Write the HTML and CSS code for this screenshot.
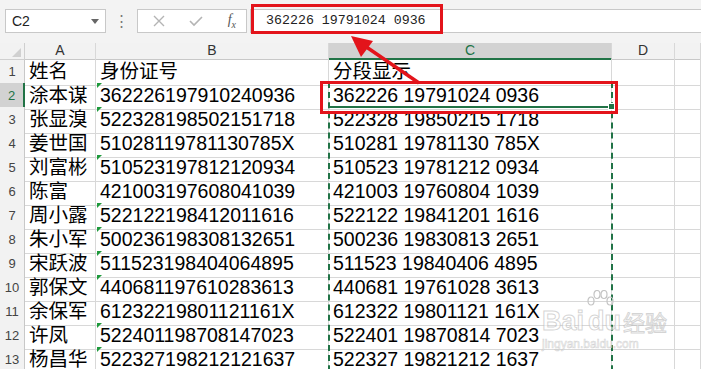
FILE: index.html
```html
<!DOCTYPE html>
<html lang="zh-CN">
<head>
    <meta charset="UTF-8">
    <title>身份证号分段显示</title>
    <link rel="stylesheet" href="styles.css">
</head>
<body>
    <div class="toolbar">
        <div class="namebox">
            <span>C2</span>
            <span class="caret"></span>
        </div>
        <div class="dots">⋮</div>
        <div class="fx-buttons">
            <svg width="12" height="12" viewBox="0 0 12 12"><path d="M1 1 L11 11 M11 1 L1 11" stroke="#b4b4b4" stroke-width="1.4" fill="none"/></svg>
            <svg width="14" height="12" viewBox="0 0 14 12"><path d="M1 6 L5 10 L13 2" stroke="#b4b4b4" stroke-width="1.6" fill="none"/></svg>
            <span class="fx">f<sub>x</sub></span>
        </div>
        <div class="formula">362226 19791024 0936</div>
    </div>
    <div class="gap"></div>

    <div class="sheet">
        <div class="row head">
            <div class="corner"><span class="tri"></span></div>
            <div class="col">A</div>
            <div class="col">B</div>
            <div class="col active">C</div>
            <div class="col">D</div>
            <div class="col"></div>
        </div>
        <div class="row"><div class="num">1</div><div class="cell">姓名</div><div class="cell">身份证号</div><div class="cell">分段显示</div><div class="cell"></div><div class="cell"></div></div>
        <div class="row"><div class="num active">2</div><div class="cell">涂本谋</div><div class="cell flag">362226197910240936</div><div class="cell">362226 19791024 0936</div><div class="cell"></div><div class="cell"></div></div>
        <div class="row"><div class="num">3</div><div class="cell">张显溴</div><div class="cell flag">522328198502151718</div><div class="cell">522328 19850215 1718</div><div class="cell"></div><div class="cell"></div></div>
        <div class="row"><div class="num">4</div><div class="cell">姜世国</div><div class="cell">51028119781130785X</div><div class="cell">510281 19781130 785X</div><div class="cell"></div><div class="cell"></div></div>
        <div class="row"><div class="num">5</div><div class="cell">刘富彬</div><div class="cell flag">510523197812120934</div><div class="cell">510523 19781212 0934</div><div class="cell"></div><div class="cell"></div></div>
        <div class="row"><div class="num">6</div><div class="cell">陈富</div><div class="cell">421003197608041039</div><div class="cell">421003 19760804 1039</div><div class="cell"></div><div class="cell"></div></div>
        <div class="row"><div class="num">7</div><div class="cell">周小露</div><div class="cell flag">522122198412011616</div><div class="cell">522122 19841201 1616</div><div class="cell"></div><div class="cell"></div></div>
        <div class="row"><div class="num">8</div><div class="cell">朱小军</div><div class="cell flag">500236198308132651</div><div class="cell">500236 19830813 2651</div><div class="cell"></div><div class="cell"></div></div>
        <div class="row"><div class="num">9</div><div class="cell">宋跃波</div><div class="cell flag">511523198404064895</div><div class="cell">511523 19840406 4895</div><div class="cell"></div><div class="cell"></div></div>
        <div class="row"><div class="num">10</div><div class="cell">郭保文</div><div class="cell flag">440681197610283613</div><div class="cell">440681 19761028 3613</div><div class="cell"></div><div class="cell"></div></div>
        <div class="row"><div class="num">11</div><div class="cell">余保军</div><div class="cell">61232219801121161X</div><div class="cell">612322 19801121 161X</div><div class="cell"></div><div class="cell"></div></div>
        <div class="row"><div class="num">12</div><div class="cell">许凤</div><div class="cell flag">522401198708147023</div><div class="cell">522401 19870814 7023</div><div class="cell"></div><div class="cell"></div></div>
        <div class="row"><div class="num">13</div><div class="cell">杨昌华</div><div class="cell flag">522327198212121637</div><div class="cell">522327 19821212 1637</div><div class="cell"></div><div class="cell"></div></div>

        <!-- copy marquee and selected cell -->
        <div class="marquee"></div>
        <div class="selected"><span class="handle"></span></div>
    </div>

    <!-- annotations -->
    <div class="mark mark-formula"></div>
    <div class="mark mark-cell"></div>
    <svg class="arrow" width="701" height="369" viewBox="0 0 701 369">
        <line x1="419" y1="83" x2="362" y2="44" stroke="#e3141b" stroke-width="3.5"/>
        <polygon points="351,36 373,41 361,57" fill="#e3141b"/>
    </svg>

    <div class="watermark">
        <div class="wm-logo">
            <span>Bai</span>
            <span class="du">
                <svg class="paw" width="28" height="24" viewBox="0 0 28 24">
                    <g fill="none" stroke="#c4c4c4" stroke-width="1.2">
                        <ellipse cx="5" cy="11" rx="3" ry="4"/>
                        <ellipse cx="11" cy="4.5" rx="3" ry="4"/>
                        <ellipse cx="18" cy="4.5" rx="3" ry="4"/>
                        <ellipse cx="24" cy="11" rx="3" ry="4"/>
                    </g>
                </svg>
                du
            </span>
            <span class="wm-cn">经验</span>
        </div>
        <div class="wm-url">jingyan.baidu.com</div>
    </div>
</body>
</html>
```

FILE: styles.css
```css
body {
    margin: 0;
    width: 701px;
    height: 369px;
    overflow: hidden;
    position: relative;
    background: #fff;
    font-family: "Liberation Sans", "Noto Sans CJK SC", sans-serif;
}
.toolbar {
    display: flex;
    align-items: center;
    height: 33px;
    padding-top: 9px;
    box-sizing: border-box;
    background: #f3f3f3;
}
.gap {
    height: 10px;
    background: #f3f3f3;
}
.namebox {
    margin-left: 5px;
    width: 101px;
    height: 24px;
    box-sizing: border-box;
    border: 1px solid #c8c8c8;
    background: #fff;
    display: flex;
    align-items: center;
    justify-content: space-between;
    padding: 0 6px 0 6px;
    font-size: 14px;
    color: #222;
}
.caret {
    width: 0;
    height: 0;
    border-left: 4px solid transparent;
    border-right: 4px solid transparent;
    border-top: 5px solid #666;
}
.dots {
    width: 31px;
    text-align: center;
    color: #777;
    font-size: 15px;
}
.fx-buttons {
    width: 110px;
    height: 24px;
    box-sizing: border-box;
    border: 1px solid #c8c8c8;
    background: #fff;
    display: flex;
    align-items: center;
    justify-content: space-between;
    padding: 0 10px 0 15px;
}
.fx {
    font-family: "Liberation Serif", serif;
    font-style: italic;
    font-size: 14px;
    color: #555;
}
.fx sub {
    font-size: 10px;
}
.formula {
    flex: 1;
    margin-left: 3px;
    height: 24px;
    box-sizing: border-box;
    border-top: 1px solid #c8c8c8;
    border-bottom: 1px solid #c8c8c8;
    border-left: 1px solid #c8c8c8;
    background: #fff;
    padding-left: 15px;
    line-height: 22px;
    font-family: "Liberation Mono", monospace;
    font-size: 13.3px;
    color: #222;
}
.sheet {
    position: relative;
    height: 326px;
    overflow: hidden;
}
.row {
    display: grid;
    grid-template-columns: 25px 71px 233px 283px 63px 1fr;
    height: 24px;
}
.row.head {
    height: 16px;
    background: #f2f2f2;
}
.corner, .col, .num, .cell {
    box-sizing: border-box;
    border-right: 1px solid #d8d8d8;
    border-bottom: 1px solid #d8d8d8;
}
.corner {
    position: relative;
    border-color: #cfcfcf;
}
.tri {
    position: absolute;
    right: 3px;
    bottom: 2px;
    width: 0;
    height: 0;
    border-left: 9px solid transparent;
    border-bottom: 9px solid #d0d0d0;
}
.col {
    text-align: center;
    font-size: 14px;
    line-height: 15px;
    color: #333;
    border-bottom-color: #c8c8c8;
}
.col.active {
    background: #d2d2d2;
    color: #217346;
    border-bottom: 2px solid #217346;
}
.num {
    background: #f2f2f2;
    text-align: center;
    font-size: 13px;
    line-height: 26px;
    color: #444;
    border-right-color: #c8c8c8;
}
.num.active {
    background: #d2d2d2;
    color: #217346;
    border-right: 2px solid #217346;
}
.cell {
    position: relative;
    padding-left: 4px;
    font-size: 19.5px;
    line-height: 25px;
    color: #000;
    white-space: nowrap;
    overflow: hidden;
}
.cell.flag::before {
    content: "";
    position: absolute;
    left: 1px;
    top: 0;
    border-top: 5px solid #1e9a3c;
    border-right: 5px solid transparent;
}
.marquee {
    position: absolute;
    left: 328px;
    top: 39px;
    width: 285px;
    height: 360px;
    box-sizing: border-box;
    border: 2px dashed #217346;
}
.selected {
    position: absolute;
    left: 329px;
    top: 40px;
    width: 283px;
    height: 25px;
    box-sizing: border-box;
    border-bottom: 2px solid #217346;
}
.handle {
    position: absolute;
    right: -3px;
    bottom: -4px;
    width: 5px;
    height: 5px;
    background: #217346;
    border: 1px solid #fff;
}
.mark {
    position: absolute;
    border: 3px solid #e3141b;
    box-sizing: border-box;
}
.mark-formula {
    left: 251px;
    top: 4px;
    width: 192px;
    height: 30px;
}
.mark-cell {
    left: 320px;
    top: 81px;
    width: 298px;
    height: 33px;
}
.arrow {
    position: absolute;
    left: 0;
    top: 0;
}
.watermark {
    position: absolute;
    left: 542px;
    top: 300px;
    white-space: nowrap;
    color: rgba(255, 255, 255, 0.6);
    -webkit-text-stroke: 1px rgba(170, 170, 170, 0.5);
}
.wm-logo {
    display: flex;
    align-items: flex-end;
    height: 36px;
    font-size: 27px;
    font-weight: bold;
    line-height: 30px;
}
.du {
    position: relative;
    margin-left: 4px;
}
.paw {
    position: absolute;
    left: -2px;
    top: -16px;
}
.wm-cn {
    font-family: "Noto Sans CJK SC", sans-serif;
    font-size: 22px;
    font-weight: normal;
    margin-left: 2px;
}
.wm-url {
    font-size: 12px;
    line-height: 16px;
    font-weight: normal;
    -webkit-text-stroke: 0.6px rgba(170, 170, 170, 0.5);
}
```
